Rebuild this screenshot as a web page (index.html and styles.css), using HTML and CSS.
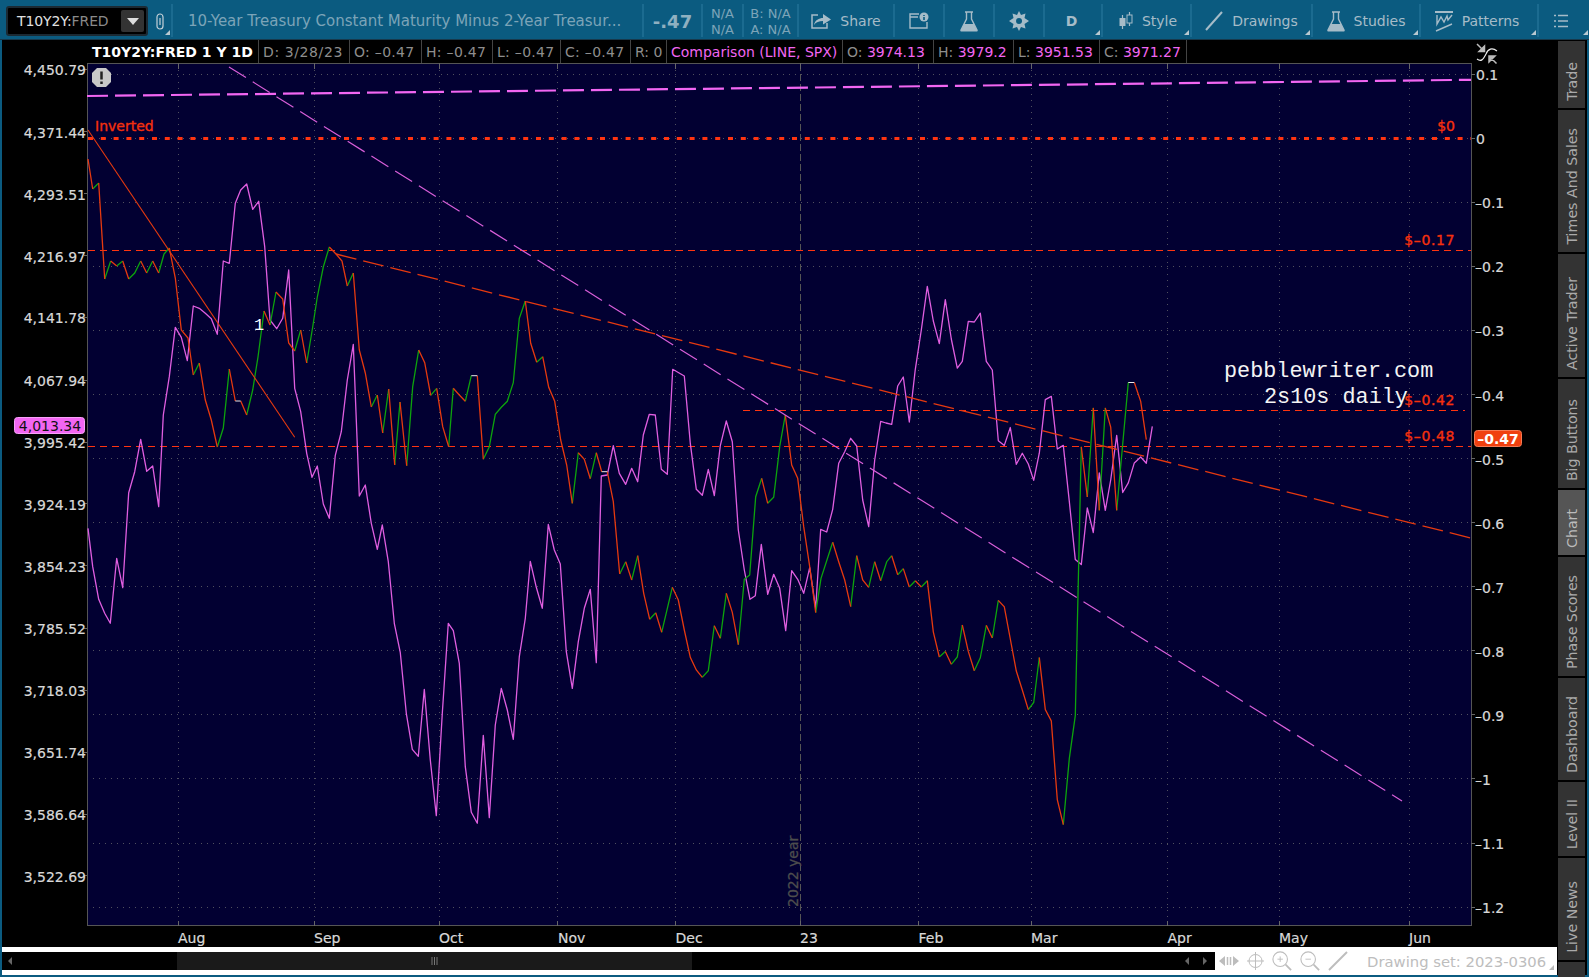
FILE: index.html
```html
<!DOCTYPE html>
<html lang="en">
<head>
<meta charset="utf-8">
<title>T10Y2Y:FRED chart</title>
<link rel="stylesheet" href="styles.css">
</head>
<body>
<header class="toolbar">
  <div class="cell cell-symbol corner">
    <div class="symbol-box">
      <span class="symbol-text">T10Y2Y:<span class="symbol-dim">FRED</span></span>
      <span class="symbol-drop"><svg width="12" height="7" viewBox="0 0 12 7"><path d="M0 0H12L6 7Z" fill="#ddd"/></svg></span>
    </div>
    <svg class="link-icon" width="8" height="17" viewBox="0 0 8 17"><path d="M1 4a3 3 0 0 1 6 0v9a3 3 0 0 1-6 0V4M4 5v7" fill="none" stroke="#c3d0d7" stroke-width="1.2"/></svg>
  </div>
  <div class="cell cell-title">10-Year Treasury Constant Maturity Minus 2-Year Treasur...</div>
  <div class="cell cell-last">-.47</div>
  <div class="cell cell-na"><span>N/A</span><span>N/A</span></div>
  <div class="cell cell-ba"><span>B: N/A</span><span>A: N/A</span></div>
  <div class="cell cell-share">
    <svg width="20" height="18" viewBox="0 0 20 18" class="ic"><path d="M7 3H1V16H16V11" fill="none" stroke-width="1.5"/><path d="M3 13C4 8 8 6 12 6V2L20 7.500 12 12.500V9C8 9 5 10 3 13Z" class="fill"/></svg>
    <span>Share</span>
  </div>
  <div class="cell cell-info">
    <svg width="20" height="18" viewBox="0 0 20 18" class="ic"><path d="M10 2H1V16H18V10M1 5H9" fill="none" stroke-width="1.4"/><circle cx="15" cy="5" r="4.500" class="fill"/><path d="M15 3V4M15 5V8" stroke="#0b5b80" stroke-width="1.600"/></svg>
  </div>
  <div class="cell cell-icon">
    <svg width="18" height="21" viewBox="0 0 18 21" class="ic"><path d="M5 1H13M6.500 1V8L1 19H17L11.500 8V1" fill="none" stroke-width="1.400"/><path d="M4 13H14L17.500 20.500H.5Z" class="fill"/></svg>
  </div>
  <div class="cell cell-icon">
    <svg width="20" height="20" viewBox="0 0 20 20" class="ic"><path d="M10 0L12 4 16.500 2.500 15.500 7 20 10 15.500 13 16.500 17.500 12 16 10 20 8 16 3.500 17.500 4.500 13 0 10 4.500 7 3.500 2.500 8 4Z" class="fill"/><circle cx="10" cy="10" r="3" fill="#0b5b80" stroke="none"/></svg>
  </div>
  <div class="cell cell-d corner">D</div>
  <div class="cell cell-style corner">
    <svg width="14" height="20" viewBox="0 0 14 20" class="ic"><path d="M3.500 4V18M10.500 1V15" fill="none" stroke-width="1.200"/><rect x="0.500" y="7" width="6" height="8" class="fill"/><rect x="8" y="4" width="5" height="8" fill="#0b5b80"/></svg>
    <span>Style</span>
  </div>
  <div class="cell cell-drawings corner">
    <svg width="18" height="20" viewBox="0 0 18 20" class="ic"><path d="M1 19L17 1" fill="none" stroke-width="2"/></svg>
    <span>Drawings</span>
  </div>
  <div class="cell cell-studies corner">
    <svg width="18" height="21" viewBox="0 0 18 21" class="ic"><path d="M5 1H13M6.500 1V8L1 19H17L11.500 8V1" fill="none" stroke-width="1.400"/><path d="M4 13H14L17.500 20.500H.5Z" class="fill"/></svg>
    <span>Studies</span>
  </div>
  <div class="cell cell-patterns corner">
    <svg width="18" height="21" viewBox="0 0 18 21" class="ic"><path d="M0 1H18" fill="none" stroke-width="2"/><path d="M2 4V13L6 6 9 11 12 5 13 9 17 4M1 20L17 13" fill="none" stroke-width="1.400"/></svg>
    <span>Patterns</span>
  </div>
  <div class="cell cell-menu corner">
    <svg width="14" height="14" viewBox="0 0 14 14" class="ic"><path d="M0 1.500H2M4 1.500H14M0 7H2M4 7H14M0 12.500H2M4 12.500H14" fill="none" stroke-width="1.500"/></svg>
  </div>
</header>

<div class="main">
  <section class="workspace">
    <div class="readout">
      <span class="readout-title">T10Y2Y:FRED 1 Y 1D</span>
      <span class="rc rc-date">D: 3/28/23</span>
      <span class="rc rc-o">O: –0.47</span>
      <span class="rc rc-h">H: –0.47</span>
      <span class="rc rc-l">L: –0.47</span>
      <span class="rc rc-c">C: –0.47</span>
      <span class="rc rc-r">R: 0</span>
      <span class="rc rc-cmp mag">Comparison (LINE, SPX)</span>
      <span class="rc rc-co">O: <b class="mag">3974.13</b></span>
      <span class="rc rc-ch">H: <b class="mag">3979.2</b></span>
      <span class="rc rc-cl">L: <b class="mag">3951.53</b></span>
      <span class="rc rc-cc">C: <b class="mag">3971.27</b></span>
      <svg class="scale-icon" width="22" height="21" viewBox="0 0 22 21"><path d="M1 16C5 19 7 17 10 11C12 6 16 4 21 8" fill="none" stroke="#eee" stroke-width="1.200"/><path d="M8.500 3V8.500H3ZM1 1L6 6" fill="#bbb" stroke="#bbb" stroke-width="1.500"/><path d="M13 13H19L13 19ZM20.500 20.500L15 15" fill="#bbb" stroke="#bbb" stroke-width="1.500"/></svg>
    </div>

    <svg class="chart" width="1555" height="884" viewBox="2 63 1555 884">
      <rect x="87.500" y="63.500" width="1384" height="862" class="plot"/>
      <path class="grid" d="M87 74.500H1471M87 138.500H1471M87 202.500H1471M87 266.500H1471M87 330.500H1471M87 394.500H1471M87 458.500H1471M87 522.500H1471M87 586.500H1471M87 650.500H1471M87 714.500H1471M87 778.500H1471M87 843.500H1471M87 907.500H1471M178.500 64V925M314.500 64V925M439.500 64V925M557.500 64V925M675.500 64V925M918.500 64V925M1031.500 64V925M1167.500 64V925M1279.500 64V925M1409.500 64V925"/>
      <path class="year-line" d="M800.500 64V925"/>
      <path class="tick" d="M178.500 63V69M314.500 63V69M439.500 63V69M557.500 63V69M675.500 63V69M800.500 63V69M918.500 63V69M1031.500 63V69M1167.500 63V69M1279.500 63V69M1409.500 63V69M178.500 921V926M314.500 921V926M439.500 921V926M557.500 921V926M675.500 921V926M800.500 921V926M918.500 921V926M1031.500 921V926M1167.500 921V926M1279.500 921V926M1409.500 921V926M1471 74.500H1475M1471 138.500H1475M1471 202.500H1475M1471 266.500H1475M1471 330.500H1475M1471 394.500H1475M1471 458.500H1475M1471 522.500H1475M1471 586.500H1475M1471 650.500H1475M1471 714.500H1475M1471 778.500H1475M1471 843.500H1475M1471 907.500H1475M84 69.500H87M84 131.500H87M84 193.500H87M84 255.500H87M84 317.500H87M84 380.500H87M84 442.500H87M84 503.500H87M84 565.500H87M84 628.500H87M84 690.500H87M84 752.500H87M84 814.500H87M84 875.500H87"/>
      <text class="year-label" transform="translate(798 907) rotate(-90)">2022 year</text>

      <path class="h-dot" d="M88 138.500H1471"/>
      <path class="h-dash" d="M88 250.500H1471M88 446.500H1471M743 410.500H1465"/>

      <polyline class="series-cmp" points="88,528.300 92.700,566.700 98.700,599.300 104.700,613.300 110.300,623.300 116.700,558.300 122.700,587.700 128.700,492.700 134.700,471.700 140.700,439.300 146.700,471.300 152.700,466 158.700,506.700 163.300,415 169.300,376.700 175.300,327.300 181.300,337.300 187.300,360.700 193.300,306 199.300,308.300 205.300,313.300 211.300,318.700 217.300,334.300 223.300,261 229.300,263.300 235.300,203.300 240.700,190 246.700,184 252.700,209.300 258.700,201.300 264.700,246.700 270,320 276.700,328.700 282.700,318.300 288.700,270 294.700,388.300 300.700,411.700 306.700,453.300 312,477.300 317.300,466 323.300,504 329.300,518.300 335.300,455.300 341.300,431.700 347.300,380 353.300,344.300 359.300,496 365.300,485 371.300,523.300 377.300,549.300 382.300,525 388.300,561.700 394.300,623.300 400.300,652.700 406.300,713.300 412.300,749.300 418.300,756.300 424.300,689.300 430.300,760 436.300,815.700 442.300,713.300 448.300,623.300 453.300,630.700 459.300,663.300 465.300,766.700 471.300,812.300 477.300,823.300 483.300,735.300 489.300,817.700 495.300,725 501.300,688.300 507.300,710 513.300,739.300 519.300,656.700 525.300,618.300 530.300,561.300 536.300,587.300 542.300,608.300 548.300,524.300 554.300,550 560.300,564 566.300,651.700 572.300,688.300 578.300,641.700 584.300,608.300 590.300,589.300 596.300,662.700 601.300,476 607.300,475 613.300,445.700 619.300,473.300 625.700,484.300 631.700,468.300 637.700,481.700 643.300,435 649.300,414.300 655.300,415 661.300,469.300 667.300,474.300 672.700,369.300 678.700,372.700 684.300,376 690.300,443.300 696.300,489.300 702.300,495.300 708.300,469.300 714.300,495.700 720.300,445.700 726.300,421 732.300,441.700 738.300,530 744.300,570 750,599.300 755.300,595.700 761.300,544.300 767.700,594.300 773.700,574.300 779.700,588.300 785.700,630.700 791.700,570.700 797.700,579.300 803.700,593.300 809.700,567.700 815.700,608.300 820.700,529.300 826.700,532 832.700,509.300 838.700,463.300 844.700,451.700 850.700,438.300 856.700,446 862.700,500 868.700,526.700 874.700,460 880.700,421.300 886,423 891.700,424.300 897.700,386 903.300,377 909.300,422 915.300,369.300 921.300,330 927.300,286.400 933.300,321 939.300,343.600 945.300,299.600 951.300,339 957.300,368.200 962.300,361.400 968.300,321.400 974.300,322 980.300,313.200 986.300,361.400 992.300,370 998.300,440.700 1004.300,445.400 1010.300,427.500 1016.300,464.300 1022.300,453.200 1028.300,464 1033.700,480.400 1039.300,453.200 1045.300,399.600 1051.300,396.400 1057.300,449 1063.300,445.400 1069.300,501.400 1075.300,559.600 1081.300,564.600 1087.300,507.900 1093.300,532.500 1099.300,472.900 1105.300,510.400 1110.700,480 1116.700,435.400 1122.700,492.500 1128.300,482.900 1134.300,462.900 1140.700,457 1146.300,463.200 1152.300,426.400"/>

      <path class="series-up" d="M92.700 189L98.700 183M104.700 279L110.700 261M116.700 266L122.700 261M128.700 279L134.700 273 140.700 261M146.700 273L152.700 261M158.700 273L164 254 169.300 248M193.300 375L199.300 363M217.300 447L223.300 428 229.300 369M246.700 415L252.700 390 258 357 264 311M270 325L276 292M294.700 351L300.700 330M306.700 363L312.700 327 317.300 297 323.300 267 329.300 247M347.300 286L353.300 273M371.300 407L377.300 395M382.700 433L388.700 389M394.700 465L400 402M406.700 465.700L412.700 386.700 418.700 350M430.700 395.300L436.700 388.300M448.700 446.700L453.300 388.300M465.300 401.300L471.300 375.700M483.300 459.300L489.300 446.700 495.300 414.300 501.300 407.300 507.300 401.300 513.300 382.700 519.300 318.300 525.300 301M536.700 362.300L542.700 356.700M572.300 503.300L578.300 452.700M590.300 478.700L596.300 452.700M619.700 574L625.700 561.700M631.700 580L637.700 555.700M649.700 619.300L655.700 612.700M661.700 632.300L672.300 587.300M702.300 677.300L708.300 670.700 714.300 625.700M720.300 638.300L726.300 593.300M738.300 644.700L744.300 579.300 749.700 575 755.700 496.700 761.700 478.300M767.700 503.300L773.700 497.300 779.700 446.700 785.300 415M815.700 612.700L821 578.300 832.700 542.300M850.700 606.700L856.700 555.700M868.700 587.300L874.700 561.700M880.700 580.700L886.700 561.700 891.700 555.700M897.700 574.700L903.300 568.600M909.300 587L915.300 580.700M921.300 587L927.300 580.700M939.300 657L945.300 651.400M951.300 664.300L957.300 657 962.300 625M974.300 670.700L980.300 657.900 986.300 625.400M992.300 638L998.300 600.400M1028.300 709.600L1033.700 702.500 1039.300 657.500M1063.300 824.600L1069.300 758.600 1075.300 715.700 1081.300 446.800M1087.300 497L1093.300 407.900M1099.300 510.400L1105.300 407.900M1116.700 510.400L1122.700 444.300 1128.300 382.500"/>
      <path class="series-down" d="M88 159L92.700 189M98.700 183L104.700 279M110.700 261L116.700 266M122.700 261L128.700 279M140.700 261L146.700 273M152.700 261L158.700 273M169.300 248L175.300 278 181.300 330 188 338 193.300 375M199.300 363L205.300 400 211.300 420 217.300 447M229.300 369L235.300 401M240.700 401L246.700 415M264 311L270 325M276 292L282.700 299 288.700 343 294.700 351M300.700 330L306.700 363M329.300 247L336 254 342 261 347.300 286M353.300 273L359.300 350 365.300 373 371.300 407M377.300 395L382.700 433M388.700 389L394.700 465M400 402L406.700 465.700M418.700 350L424.700 362.700 430.700 395.300M436.700 388.300L442.700 426.700 448.700 446.700M453.300 388.300L459.300 395 465.300 401.300M477.300 375.700L483.300 459.300M525.300 301L530.700 343.300 536.700 362.300M542.700 356.700L548.700 387.300 554.700 401.300 560.700 440 566.700 465 572.300 503.300M578.300 452.700L584.300 459.300 590.300 478.700M596.300 452.700L601.700 471.700M607.300 471.700L613.300 501.700 619.700 574M625.700 561.700L631.700 580M637.700 555.700L643.700 593.300 649.700 619.300M655.700 612.700L661.700 632.300M672.300 587.300L678.300 600 684.300 630 690.300 657.300 696.300 670 702.300 677.300M714.300 625.700L720.300 638.300M726.300 593.300L732.300 612.300 738.300 644.700M761.700 478.300L767.700 503.300M785.300 415L791.700 465 797.700 478.300 803.700 526.700 809.700 566.700 815.700 612.700M832.700 542.300L838.700 561.700 844.700 580 850.700 606.700M856.700 555.700L862.700 580 868.700 587.300M874.700 561.700L880.700 580.700M891.700 555.700L897.700 574.700M903.300 568.600L909.300 587M915.300 580.700L921.300 587M927.300 580.700L933.300 631.800 939.300 657M945.300 651.400L951.300 664.300M962.300 625L968.300 651.400 974.300 670.700M986.300 625.400L992.300 638M998.300 600.400L1004.300 606.800 1010.300 639 1016.300 671 1022.300 690 1028.300 709.600M1039.300 657.500L1045.300 709.600 1051.300 721 1057.300 799.600 1063.300 824.600M1081.300 446.800L1087.300 497M1093.300 407.900L1099.300 510.400M1105.300 407.900L1110.700 427 1116.700 510.400M1134.300 382.500L1140.700 401.400 1146.300 439.600"/>
      <path class="series-flat" d="M235.300 401H240.700M471.300 375.700H477.300M601.700 471.700H607.300M1128.300 382.500H1134.300"/>

      <path class="trend-mag-thick" d="M87 96L1471 79.800"/>
      <path class="trend-mag" d="M229 67L1402 801"/>
      <path class="trend-red-solid" d="M88 130L294.700 437.300"/>
      <path class="trend-red" d="M336 254L1471 538"/>

      <text class="lvl" x="95" y="131">Inverted</text>
      <text class="lvl end" x="1455" y="131">$0</text>
      <text class="lvl end wide" x="1455" y="245">$–0.17</text>
      <text class="lvl end wide" x="1455" y="405">$–0.42</text>
      <text class="lvl end wide" x="1455" y="441">$–0.48</text>
      <text class="note" x="1224" y="377">pebblewriter.com</text>
      <text class="note" x="1264" y="403">2s10s daily</text>
      <text class="mark" x="254" y="330">1</text>

      <path d="M97 68H106L111 73V82L106 87H97L92 82V73Z" class="warn-bg"/>
      <path d="M101.500 71.500V79.500M101.500 81.500V84" class="warn-fg"/>

      <g class="ax-left">
        <text x="86" y="75">4,450.79</text><text x="86" y="137.500">4,371.44</text><text x="86" y="199.500">4,293.51</text><text x="86" y="261.500">4,216.97</text><text x="86" y="323">4,141.78</text><text x="86" y="386">4,067.94</text><text x="86" y="448">3,995.42</text><text x="86" y="509.500">3,924.19</text><text x="86" y="571.500">3,854.23</text><text x="86" y="634">3,785.52</text><text x="86" y="696">3,718.03</text><text x="86" y="758">3,651.74</text><text x="86" y="820">3,586.64</text><text x="86" y="881.500">3,522.69</text>
      </g>
      <rect x="14.500" y="417.500" width="70" height="16" rx="3" class="badge-mag"/>
      <text x="50" y="431" class="badge-mag-text">4,013.34</text>

      <g class="ax-right">
        <text x="1476" y="80">0.1</text><text x="1476" y="144">0</text><text x="1475" y="208">–0.1</text><text x="1475" y="272">–0.2</text><text x="1475" y="336">–0.3</text><text x="1475" y="400.500">–0.4</text><text x="1475" y="464.500">–0.5</text><text x="1475" y="528.500">–0.6</text><text x="1475" y="592.500">–0.7</text><text x="1475" y="656.500">–0.8</text><text x="1475" y="720.500">–0.9</text><text x="1475" y="784.500">–1</text><text x="1475" y="848.500">–1.1</text><text x="1475" y="912.500">–1.2</text>
      </g>
      <rect x="1474.500" y="430.500" width="47" height="16" rx="3" class="badge-red"/>
      <text x="1498" y="444" class="badge-red-text">–0.47</text>

      <g class="ax-time">
        <text x="178" y="943">Aug</text><text x="314" y="943">Sep</text><text x="439" y="943">Oct</text><text x="558" y="943">Nov</text><text x="675.500" y="943">Dec</text><text x="800" y="943">23</text><text x="918.500" y="943">Feb</text><text x="1031" y="943">Mar</text><text x="1167.500" y="943">Apr</text><text x="1279" y="943">May</text><text x="1409" y="943">Jun</text>
      </g>
    </svg>

    <div class="bottom">
      <div class="scrollbar">
        <svg class="sb-arrow" width="4" height="8" viewBox="0 0 4 8"><path d="M4 0V8L0 4Z" fill="#666"/></svg>
        <div class="thumb"><svg width="7" height="8" viewBox="0 0 7 8"><path d="M1 0V8M3.500 0V8M6 0V8" stroke="#777"/></svg></div>
        <div class="sb-end">
          <svg width="4" height="8" viewBox="0 0 4 8"><path d="M4 0V8L0 4Z" fill="#666"/></svg>
          <svg width="4" height="8" viewBox="0 0 4 8"><path d="M0 0V8L4 4Z" fill="#666"/></svg>
        </div>
      </div>
      <div class="tools">
        <svg width="20" height="12" viewBox="0 0 20 12" class="tool"><path d="M6 1V11L0 6ZM14 1V11L20 6Z" class="tfill"/><path d="M8.500 2V10M11.500 2V10" fill="none" stroke-width="1.500"/></svg>
        <svg width="17" height="18" viewBox="0 0 17 18" class="tool"><circle cx="8.500" cy="9" r="6.500" fill="none"/><path d="M8.500 0V18M0 9H17" fill="none"/></svg>
        <svg width="20" height="20" viewBox="0 0 22 22" class="tool"><circle cx="9" cy="9" r="8" fill="none" stroke-width="1.200"/><path d="M15 15L21 21" fill="none" stroke-width="2"/><path d="M9 6V12M6 9H12" fill="none"/></svg>
        <svg width="20" height="20" viewBox="0 0 22 22" class="tool"><circle cx="9" cy="9" r="8" fill="none" stroke-width="1.200"/><path d="M15 15L21 21" fill="none" stroke-width="2"/><path d="M6 9H12" fill="none"/></svg>
        <svg width="20" height="20" viewBox="0 0 20 20" class="tool"><path d="M1 19L19 1" fill="none" stroke-width="2"/></svg>
        <span class="drawing-set">Drawing set: 2023-0306</span>
      </div>
    </div>
  </section>

  <nav class="sidebar">
    <div class="tab tab-trade"><span>Trade</span></div>
    <div class="tab tab-times"><span>Times And Sales</span></div>
    <div class="tab tab-active"><span>Active Trader</span></div>
    <div class="tab tab-big"><span>Big Buttons</span></div>
    <div class="tab tab-chart"><span>Chart</span></div>
    <div class="tab tab-phase"><span>Phase Scores</span></div>
    <div class="tab tab-dash"><span>Dashboard</span></div>
    <div class="tab tab-level"><span>Level II</span></div>
    <div class="tab tab-news"><span>Live News</span></div>
    <div class="tab tab-more"></div>
  </nav>
</div>
</body>
</html>
```
FILE: styles.css
```css
* { box-sizing: border-box; }
html, body { margin: 0; height: 100%; }
body {
  width: 1589px;
  height: 977px;
  overflow: hidden;
  background: #0b5b80;
  font-family: "DejaVu Sans", sans-serif;
  font-size: 14px;
  display: flex;
  flex-direction: column;
}

/* toolbar */
.toolbar {
  height: 40px;
  flex: none;
  display: flex;
  padding: 4px 0 2px;
  color: #a6bcc8;
  border-bottom: 1px solid #17394c;
}
.cell {
  position: relative;
  flex: none;
  display: flex;
  align-items: center;
  justify-content: center;
  gap: 9px;
  padding-top: 1px;
  border-right: 2px solid #1b6b90;
}
.corner::after {
  content: "";
  position: absolute;
  right: 1px;
  bottom: 2px;
  border-style: solid;
  border-width: 0 0 5px 5px;
  border-color: transparent transparent #b9c9d1 transparent;
}
.ic { stroke: #a6bcc8; }
.ic .fill { fill: #a6bcc8; stroke: none; }
.cell-symbol { width: 173px; justify-content: flex-start; padding-left: 6px; gap: 8px; }
.symbol-box {
  width: 142px;
  height: 30px;
  background: #000;
  border: 2px solid #1c2a33;
  border-radius: 3px;
  display: flex;
  align-items: center;
  justify-content: space-between;
  padding: 0 2px 0 9px;
  color: #e0e0e0;
}
.symbol-dim { color: #8a8a8a; }
.symbol-text { letter-spacing: -0.1px; }
.symbol-drop {
  width: 23px;
  height: 22px;
  background: #333;
  border-radius: 2px;
  display: flex;
  align-items: center;
  justify-content: center;
}
.cell-title { width: 471px; justify-content: flex-start; padding-left: 15px; color: #7ca4b8; white-space: nowrap; font-size: 15px; }
.cell-last { width: 59px; color: #8fb0c0; font-weight: bold; font-size: 18px; }
.cell-na, .cell-ba { flex-direction: column; gap: 1px; color: #7ca4b8; font-size: 13px; line-height: 15px; }
.cell-na { width: 41px; }
.cell-ba { width: 55px; }
.cell-share { width: 96px; }
.cell-info, .cell-icon { width: 50px; }
.cell-d { width: 58px; font-weight: bold; padding-right: 3px; }
.cell-style { width: 89px; padding-left: 3px; }
.cell-drawings { width: 121px; }
.cell-studies { width: 108px; }
.cell-patterns { width: 118px; padding-right: 4px; }
.cell-menu { flex: 1; border-right: 0; padding-right: 6px; }

/* main */
.main {
  flex: none;
  height: 935px;
  display: flex;
  padding: 0 2px 0 2px;
}
.workspace { width: 1555px; flex: none; display: flex; flex-direction: column; background: #000; }

.readout {
  height: 23px;
  flex: none;
  display: flex;
  align-items: stretch;
  padding-left: 85px;
  background: #000;
  color: #8e8e8e;
  white-space: nowrap;
  line-height: 24px;
}
.readout-title { color: #fff; font-weight: bold; padding-left: 5px; width: 171px; }
.rc { border-left: 1px solid #444; padding-left: 4px; flex: none; }
.rc b { font-weight: normal; }
.mag { color: #f266f2; }
.rc-date { width: 91px; letter-spacing: 0.6px; }
.rc-o { width: 72px; letter-spacing: 0.3px; }
.rc-h { width: 71px; letter-spacing: 0.3px; }
.rc-l { width: 68px; letter-spacing: 0.3px; }
.rc-c { width: 70px; letter-spacing: 0.3px; }
.rc-r { width: 36px; }
.rc-cmp { width: 176px; }
.rc-co { width: 91px; }
.rc-ch { width: 80px; }
.rc-cl { width: 86px; }
.rc-cc { width: 88px; border-right: 1px solid #444; }
.scale-icon { margin-left: auto; margin-right: 59px; margin-top: 3px; }

/* chart */
.chart { display: block; flex: none; overflow: visible; }
.chart text { font-family: "DejaVu Sans", sans-serif; font-size: 14px; }
.plot { fill: #020032; stroke: #555; stroke-width: 1; }
.grid { stroke: #50505f; stroke-width: 1; stroke-dasharray: 1 5; fill: none; }
.year-line { stroke: #555; stroke-width: 1; stroke-dasharray: 7 3; fill: none; }
.tick { stroke: #666; stroke-width: 1; fill: none; }
.chart .year-label { fill: #4d4d4d; font-size: 14px; stroke: #4d4d4d; stroke-width: 0.3; }
.h-dot { stroke: #ff3410; stroke-width: 3; stroke-dasharray: 5 7.800; fill: none; }
.h-dash { stroke: #ff3410; stroke-width: 1; stroke-dasharray: 7 5; fill: none; }
.series-cmp { fill: none; stroke: #e05ee0; stroke-width: 1.300; stroke-linejoin: round; }
.series-up { fill: none; stroke: #0da30d; stroke-width: 1.300; }
.series-down { fill: none; stroke: #e6390f; stroke-width: 1.300; }
.series-flat { fill: none; stroke: #e8e8e8; stroke-width: 1; }
.trend-mag-thick { fill: none; stroke: #f266f2; stroke-width: 2.200; stroke-dasharray: 21 7; }
.trend-mag { fill: none; stroke: #d95ed9; stroke-width: 1.200; stroke-dasharray: 20 8; }
.trend-red-solid { fill: none; stroke: #e6390f; stroke-width: 1.100; }
.trend-red { fill: none; stroke: #e6390f; stroke-width: 1.300; stroke-dasharray: 21 7; }
.lvl { fill: #f5300d; stroke: #f5300d; stroke-width: 0.35; }
.chart .lvl.end { text-anchor: end; }
.chart .lvl.wide { letter-spacing: 0.6px; }
.chart .note { fill: #f4f4f4; font-family: "Liberation Mono", monospace; font-size: 21.800px; }
.chart .mark { fill: #fff; font-family: "Liberation Mono", monospace; font-size: 17px; }
.warn-bg { fill: #c8c8c8; }
.warn-fg { stroke: #222; stroke-width: 2.500; fill: none; }
.ax-left text { fill: #d8d8d8; stroke: #d8d8d8; stroke-width: 0.2; text-anchor: end; }
.ax-right text, .ax-time text { fill: #d8d8d8; stroke: #d8d8d8; stroke-width: 0.2; }
.badge-mag { fill: #f266f2; stroke: #f8a0f8; }
.chart .badge-mag-text { fill: #111; text-anchor: middle; }
.badge-red { fill: #f0400f; stroke: #f57a55; }
.chart .badge-red-text { fill: #fff; font-weight: bold; text-anchor: middle; }

/* bottom strip */
.bottom {
  flex: none;
  height: 28px;
  background: #fff;
  display: flex;
  align-items: stretch;
  padding: 5px 0;
}
.scrollbar {
  width: 1213px;
  flex: none;
  background: #000;
  display: flex;
  align-items: center;
  padding-left: 6px;
}
.sb-arrow { flex: none; }
.thumb {
  width: 515px;
  height: 100%;
  margin-left: 165px;
  flex: none;
  background: #1a1a1a;
  display: flex;
  align-items: center;
  justify-content: center;
}
.sb-end { margin-left: auto; display: flex; gap: 14px; padding-right: 8px; }
.tools {
  flex: 1;
  display: flex;
  align-items: center;
  padding-left: 4px;
  gap: 8px;
  color: #bbb;
  position: relative;
  white-space: nowrap;
}
.tool { stroke: #bdbdbd; flex: none; }
.tool .tfill { fill: #bdbdbd; stroke: none; }
.drawing-set { margin-left: 11px; white-space: nowrap; font-size: 14.800px; color: #bdbdbd; }
.tools::after {
  content: "";
  position: absolute;
  right: 3px;
  bottom: 0;
  border-style: solid;
  border-width: 0 0 5px 5px;
  border-color: transparent transparent #bbb transparent;
}

/* sidebar */
.sidebar {
  flex: 1;
  background: #000;
  display: flex;
  flex-direction: column;
  gap: 2px;
  padding: 1px 2px 0 1px;
}
.tab {
  flex: none;
  background: #333;
  color: #aaa;
  display: flex;
  justify-content: center;
  align-items: flex-end;
  padding-bottom: 7px;
  font-size: 14.200px;
}
.tab span { writing-mode: vertical-rl; transform: rotate(180deg); white-space: nowrap; }
.tab-trade { height: 67px; }
.tab-times { height: 142px; }
.tab-active { height: 123px; }
.tab-big { height: 109px; }
.tab-chart { height: 65px; background: #555; color: #bbb; }
.tab-phase { height: 119px; }
.tab-dash { height: 102px; }
.tab-level { height: 74px; }
.tab-news { height: 102px; }
.tab-more { height: 17px; }
```
